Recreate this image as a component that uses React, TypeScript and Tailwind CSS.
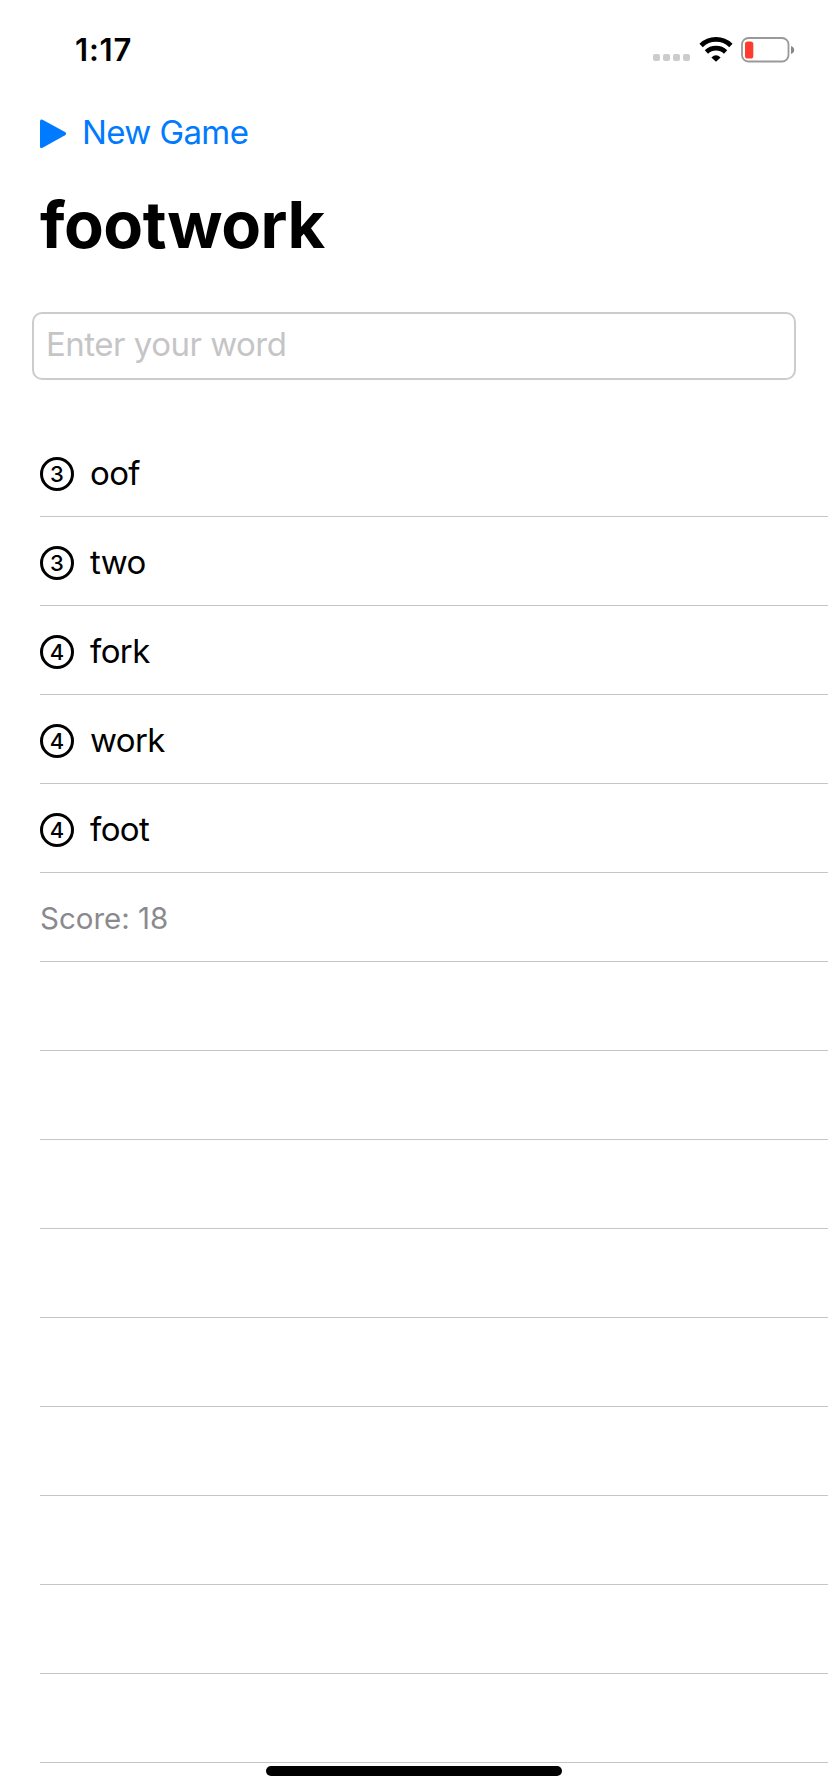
import React from "react";

const words = ["oof", "two", "fork", "work", "foot"];
const emptyRows = Array.from({ length: 9 }, (_, i) => i);

function StatusBar() {
  return (
    <header className="flex h-25 items-center pl-[75px] pr-[33px]">
      <span className="text-[31px] leading-10 font-semibold tracking-[0.8px]">1:17</span>
      <div className="ml-auto flex items-center">
        <div className="mt-[15px] mr-[9px] flex gap-[3px]">
          {[0, 1, 2, 3].map((i) => (
            <span key={i} className="size-[7px] rounded-[2px] bg-[#cccccc]" />
          ))}
        </div>
        <svg width="34" height="26" viewBox="0 0 34 26" className="mr-[8px]" aria-hidden="true">
          <g fill="none" stroke="#000" strokeWidth="4.8">
            <path d="M2.1 8.4A21.5 21.5 0 0 1 31.9 8.4" />
            <path d="M7.4 15A14 14 0 0 1 26.6 15" />
          </g>
          <path d="M17 24.8L12.4 20.6Q17 16 21.6 20.6Z" />
        </svg>
        <svg width="54" height="26" viewBox="0 0 54 26" aria-hidden="true">
          <rect x="1" y="1" width="46.5" height="23.5" rx="6.5" fill="none" stroke="#999" strokeWidth="1.8" />
          <rect x="4" y="4.5" width="8.3" height="17" rx="2.6" fill="#ff3b30" />
          <path d="M50 9Q53.2 10.2 53.2 13T50 17Z" fill="#888" />
        </svg>
      </div>
    </header>
  );
}

function CountBadge({ value }: { value: number }) {
  return (
    <span className="flex size-[34px] shrink-0 items-center justify-center rounded-full border-[3px] border-black text-[22px] leading-none font-medium">
      {value}
    </span>
  );
}

export default function App() {
  return (
    <div className="relative h-[1792px] w-[828px] overflow-hidden bg-white font-['Inter','Liberation_Sans',sans-serif] text-black">
      <StatusBar />
      <button className="mt-3 ml-10 flex h-10 items-center gap-[15px] text-[#007aff]">
        <svg width="27" height="30" viewBox="0 0 27 30" fill="currentColor" className="mt-[3px]" aria-hidden="true">
          <path d="M0 2.4Q0 -.5 2.6 .8L25 13.1Q27.3 14.7 25 16.2L2.6 28.8Q0 30.1 0 27.2Z" />
        </svg>
        <span className="text-[33px] leading-10 tracking-[-0.6px]">New Game</span>
      </button>
      <h1 className="mt-[33px] ml-10 text-[65px] leading-20 font-bold tracking-[-0.5px]">footwork</h1>
      <div className="mx-8 mt-[47px] flex h-[68px] items-center rounded-[10px] border-2 border-[#cccccc] px-3 pb-1">
        <input
          className="w-full text-[33px] leading-10 tracking-[-0.5px] outline-none placeholder:text-[#c5c5c7]"
          placeholder="Enter your word"
        />
      </div>
      <ul className="mt-12 ml-10">
        {words.map((word) => (
          <li key={word} className="flex h-[89px] items-center gap-4 border-b border-[#c6c6c8] pt-[3px]">
            <CountBadge value={word.length} />
            <span className="pb-[2px] text-[33px] leading-10 tracking-[-0.6px]">{word}</span>
          </li>
        ))}
        <li className="flex h-[89px] items-center border-b border-[#c6c6c8] pt-[3px] text-[29.5px] text-[#8a8a8e]">
          Score: {words.reduce((sum, word) => sum + word.length, 0)}
        </li>
        {emptyRows.map((row) => (
          <li key={row} className="h-[89px] border-b border-[#c6c6c8]" />
        ))}
      </ul>
      <div className="absolute bottom-4 left-[266px] h-[10px] w-[296px] rounded-full bg-black" />
    </div>
  );
}
